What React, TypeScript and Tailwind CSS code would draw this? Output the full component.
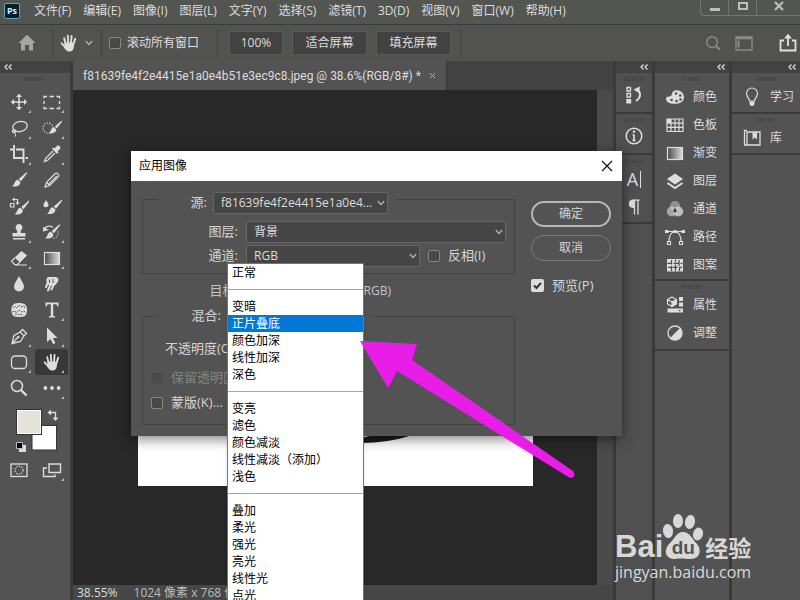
import type { ReactNode } from 'react';

const menus = ['文件(F)', '编辑(E)', '图像(I)', '图层(L)', '文字(Y)', '选择(S)', '滤镜(T)', '3D(D)', '视图(V)', '窗口(W)', '帮助(H)'];

const blendGroups = [
    ['正常'],
    ['变暗', '正片叠底', '颜色加深', '线性加深', '深色'],
    ['变亮', '滤色', '颜色减淡', '线性减淡（添加）', '浅色'],
    ['叠加', '柔光', '强光', '亮光', '线性光', '点光'],
];

/* Icons, all on a 20px grid */
function Icon({ children, className = 'size-5' }: { children: ReactNode; className?: string }) {
    return (
        <svg viewBox="0 0 20 20" className={className} fill="none" stroke="currentColor" strokeWidth="1.5" aria-hidden="true">
            {children}
        </svg>
    );
}

const brush = (
    <>
        <path d="M17.5 2.2 18.3 3 12 11.2 9.8 9Z" fill="currentColor" stroke="none" />
        <path d="M9 9.8 11.3 12C11.5 15.6 7.6 17.3 3 16.3 5.6 15.6 5.2 10.2 9 9.8Z" fill="currentColor" stroke="none" />
    </>
);

const hand = (
    <>
        <path d="M6.6 11 5.2 5.2M9.2 10 8.8 2.8M12 10 12.6 2.9M14.5 11 16.2 5.6M6.6 14.5 2.6 10.3" strokeWidth="1.9" strokeLinecap="round" />
        <path d="M5.7 9.5H15.3L14.8 14.6C14.3 17 13 18.6 10.8 18.6 8 18.6 6.8 17 5 14.4Z" fill="currentColor" stroke="none" />
    </>
);

const gradientRect = (id: string) => (
    <>
        <defs>
            <linearGradient id={id}>
                <stop offset="0" stopColor="#4a4a4a" />
                <stop offset="1" stopColor="#dddddd" />
            </linearGradient>
        </defs>
        <rect x="2.5" y="4.5" width="15" height="12" fill={`url(#${id})`} strokeWidth="1.2" />
    </>
);

const tools: { name: string; more?: boolean; active?: boolean; art: ReactNode }[] = [
    { name: '移动', more: true, art: <><path d="M10 4V16M4 10H16" /><path d="M10 1.8 13 5H7ZM10 18.2 7 15H13ZM1.8 10 5 7V13ZM18.2 10 15 13V7Z" fill="currentColor" stroke="none" /></> },
    { name: '矩形选框', more: true, art: <path d="M2 6.5V4.5H5M7.5 4.5H12M14.5 4.5H17.5V6.5M17.5 9V12M17.5 14.5V16.5H14.5M12 16.5H7.5M5 16.5H2V14.5M2 12V9" strokeWidth="1.3" /> },
    { name: '套索', more: true, art: <><ellipse cx="11" cy="8.5" rx="7.3" ry="5" transform="rotate(-12 11 8.5)" strokeWidth="1.3" /><path d="M5 11.8C2 12.5 3.5 15.5 6 14.2 8 13 6 11 5 12 4 13 7 15 6.5 18.5" strokeWidth="1.1" /></> },
    { name: '快速选择', more: true, art: <><circle cx="6" cy="10" r="5" strokeDasharray="1.2 1.5" strokeWidth="1.2" /><g transform="translate(4 .5) scale(.9)">{brush}</g></> },
    { name: '裁剪', more: true, art: <path d="M5 1V14H15M1 5.5H4M7 5.5H14.5V14M14.5 14V19M16.5 14H19" strokeWidth="1.9" /> },
    { name: '吸管', more: true, art: <><path d="M11 7 3.5 14.5 2.5 17.5 5.5 16.5 13 9" strokeWidth="1.3" /><path d="M10 4.8 15.2 10 16.5 8.5 15.5 7.5 18.2 4.8C19 3 17 1 15.2 1.8L12.5 4.5 11.5 3.5Z" fill="currentColor" stroke="none" /></> },
    { name: '画笔', art: brush },
    { name: '铅笔', art: <path d="M3 17 4.5 12.3 13.3 3.5C15 2 18 5 16.5 6.7L7.7 15.5ZM4.5 12.3 7.7 15.5M6.8 14.2 15 6" strokeWidth="1.2" /> },
    { name: '颜色替换', art: <><path d="M1.5 7.5H5V11H1.5ZM4.5 3.5H8.5V7" strokeWidth="1.2" /><path d="M5.5 1.2V5.8L3 3.5ZM6.2 6.5H10.8L8.5 9Z" fill="currentColor" stroke="none" /><g transform="translate(2.5 2)">{brush}</g></> },
    { name: '混合画笔', art: <><path d="M4 4C5.5 6.5 7 8 6.5 9.6A2.7 2.7 0 0 1 1.4 9.4C1.2 8 3 6.5 4 4Z" fill="currentColor" stroke="none" /><g transform="translate(2 1.5)">{brush}</g></> },
    { name: '仿制图章', more: true, art: <path d="M10 2A3.5 3.5 0 0 1 12.4 8C11.5 9 11.5 10 12 11H16.5V14.5H3.5V11H8C8.5 10 8.5 9 7.6 8A3.5 3.5 0 0 1 10 2ZM4 16H16V17.5H4Z" fill="currentColor" stroke="none" /> },
    { name: '历史记录画笔', more: true, art: <><path d="M1.5 8.5C3 4 7.5 3 11 5.5" strokeWidth="1.2" /><path d="M1 5 7 8 1 9.5Z" fill="currentColor" stroke="none" /><path d="M16 9.5C17 13 14 16.5 10.5 16.5" strokeDasharray="1.2 1.5" strokeWidth="1.1" />{brush}</> },
    { name: '橡皮擦', more: true, art: <><path d="M12.5 3.5 17.5 7.5 11 14 6.2 9.5Z" fill="currentColor" strokeWidth="1" /><path d="M6 9.8 2.5 13.2 5.5 16.5H8.5L10.8 14.2M6 17H18" strokeWidth="1.2" /></> },
    { name: '渐变', more: true, art: gradientRect('tool-gradient') },
    { name: '模糊', art: <path d="M10 2C12 6 15 9.5 15 12.5A5 5 0 0 1 5 12.5C5 9.5 8 6 10 2Z" fill="currentColor" stroke="none" /> },
    { name: '涂抹', art: <><path d="M6 3H14C16.5 3.5 17 5.5 16 7.5L13.5 11 8 12 5 9.5C4 7 4 4.5 6 3Z" fill="currentColor" stroke="none" /><path d="M6.5 7 4 13M9.5 8 6 16.5M13 8 9.5 15.5" strokeWidth="2" strokeLinecap="round" /><path d="M7.5 5.5V9M11 5V9" stroke="#535353" strokeWidth="1" /></> },
    { name: '海绵', art: <><path d="M5 4C8 2.5 14 2.5 16 4.5 19 7 18.5 13 16.5 15.5 14 17.5 7 17.5 4.5 16 1.5 13 1.5 6.5 5 4Z" fill="currentColor" stroke="none" /><path d="M4 8 6 6 8 8 10 5 12 7 15 6 16 9M3 12 6 11 7 13 10 10 12 12 15 11 17 13M6 15 8 14 11 15 14 14" stroke="#535353" strokeWidth=".9" strokeDasharray="2 1" /></> },
    { name: '文字', more: true, art: <path d="M3.5 2.5H16.5V6.5H15.3C15 4.8 14.5 4.3 13 4.3H11.2V15C11.2 16 11.7 16.3 13.2 16.5V17.5H6.8V16.5C8.3 16.3 8.8 16 8.8 15V4.3H7C5.5 4.3 5 4.8 4.7 6.5H3.5Z" fill="currentColor" stroke="none" /> },
    { name: '钢笔', more: true, art: <><path d="M3 17.5 5 9.5 11 6 15 9.8 11.5 15.5ZM3 17.5 9 11.3M11 6 13.5 3.5 17.5 7.5 15 9.8" strokeWidth="1.3" /><circle cx="9.3" cy="11" r="1.2" fill="currentColor" stroke="none" /></> },
    { name: '路径选择', more: true, art: <path d="M5 1.5 15.5 12H10.8L13.5 17 11.2 18.2 8.5 13 5 16Z" fill="currentColor" stroke="none" /> },
    { name: '圆角矩形', more: true, art: <rect x="2.5" y="4" width="15" height="12.5" rx="3.5" strokeWidth="1.3" /> },
    { name: '抓手', more: true, active: true, art: hand },
    { name: '缩放', art: <><circle cx="8" cy="8" r="5.5" /><path d="M12 12 17.5 17.5" strokeWidth="2.4" /></> },
    { name: '编辑工具栏', more: true, art: <path d="M1.5 10A1.9 1.9 0 1 1 5.3 10 1.9 1.9 0 0 1 1.5 10M8.1 10A1.9 1.9 0 1 1 11.9 10 1.9 1.9 0 0 1 8.1 10M14.7 10A1.9 1.9 0 1 1 18.5 10 1.9 1.9 0 0 1 14.7 10" fill="currentColor" stroke="none" /> },
];

const colorPanels = [
    { name: '颜色', art: <><path d="M10 3.5C15 2.5 19 6 19 10.5 19 15 14 17 9 16.8 4 17 1 14.5 1 11.8 1 9 4.5 10 6 9 7.5 7.5 6.5 4.5 10 3.5Z" fill="currentColor" stroke="none" /><path d="M11 6.5h.1M15.2 8.5h.1M15.5 12.5h.1M11.5 14h.1M6.5 13h.1" stroke="#535353" strokeWidth="2.6" strokeLinecap="round" /></> },
    { name: '色板', art: <><path d="M2 4H18V16.5H2ZM2 8.2H18M2 12.3H18M6 4V16.5M10 4V16.5M14 4V16.5" strokeWidth="1.2" /><path d="M2 4H6V8H2Z" fill="currentColor" stroke="none" /></> },
    { name: '渐变', art: gradientRect('panel-gradient') },
    { name: '图层', art: <><path d="M10 2.5 18 8 10 13.5 2 8Z" fill="currentColor" stroke="none" /><path d="M2.5 12 10 17 17.5 12" strokeWidth="2" /></> },
    { name: '通道', art: <g fill="currentColor" stroke="none"><circle cx="10" cy="7" r="5" opacity=".45" /><circle cx="6.8" cy="12.5" r="5" opacity=".6" /><circle cx="13.2" cy="12.5" r="5" opacity=".75" /><path d="M10 8.5 12 12 10 14 8 12Z" fill="#444444" /></g> },
    { name: '路径', art: <><path d="M1 4.5H19M4 15C4 9 6 5 10 4.5 14 5 16 9 16 15" strokeWidth="1.2" /><path d="M0 3H3.5V6H0ZM16.5 3H20V6H16.5ZM8.5 3H11.5V6H8.5Z" fill="currentColor" stroke="none" /><path d="M2.5 14.5H5.5V17.5H2.5ZM14.5 14.5H17.5V17.5H14.5Z" fill="#535353" strokeWidth="1.2" /></> },
    { name: '图案', art: <><path d="M2 4H18V16.5H2Z" fill="currentColor" stroke="none" /><path d="M2.5 8.3H7M8.5 8.3H14M15.5 8.3H17.5M3 12.3H6M7.5 12.3H12.5M14 12.3H17M6.5 5V9.5M6.5 11V16M10.5 4.5V7M10.5 9.5V16M14 5V11M14.5 13V16" stroke="#4b4b4b" strokeWidth="1.2" /></> },
];

const adjustPanels = [
    { name: '属性', art: <><path d="M7 2 11.5 4.5V9L7 11.5 2.5 9V4.5ZM2.5 4.5 7 7 11.5 4.5M7 7V11.5" strokeWidth="1.2" /><path d="M7 7 11.5 4.5V9L7 11.5ZM14 2H18V6H14ZM14 7.5H18V11.5H14ZM2.5 13.5H18V17.5H2.5Z" fill="currentColor" stroke="none" /><path d="M13 15H16L14.5 16.5Z" fill="#535353" stroke="none" /></> },
    { name: '调整', art: <><circle cx="10" cy="10" r="7" strokeWidth="1.3" /><path d="M15 5A7 7 0 1 1 5 15Z" fill="currentColor" stroke="none" /></> },
];

const learnPanels = [
    { name: '学习', art: <><path d="M7.5 14C7.5 11.5 4.5 10 4.5 6.5A5.5 5.5 0 0 1 15.5 6.5C15.5 10 12.5 11.5 12.5 14Z" strokeWidth="1.2" /><path d="M7.5 14.5H12.5V17L11 19H9L7.5 17Z" fill="currentColor" stroke="none" /></> },
    { name: '库', art: <><path d="M5 4H18V17H5ZM5 2.5H2.5V17H5" strokeWidth="1.3" /><path d="M10.5 4.5H15V11.5L12.7 9.5 10.5 11.5Z" fill="currentColor" stroke="none" /></> },
];

function Grip() {
    return (
        <div className="flex h-2.5 justify-center pt-1">
            <div className="h-1 w-5 bg-[repeating-linear-gradient(90deg,#434343_0_1px,transparent_1px_2px)]" />
        </div>
    );
}

function Collapse({ left = false }: { left?: boolean }) {
    return (
        <div className={`flex h-3 items-center bg-[#424242] px-1 ${left ? '' : 'justify-end'}`}>
            <svg viewBox="0 0 8 6" className="h-1.5 w-2" fill="none" stroke="#dddddd" strokeWidth="1.3" aria-hidden="true">
                <path d="M3.5.5 1 3 3.5 5.5M7.5.5 5 3 7.5 5.5" />
            </svg>
        </div>
    );
}

function Chevron({ className = '' }: { className?: string }) {
    return (
        <svg viewBox="0 0 8 6" className={`pointer-events-none h-1.5 w-2 shrink-0 ${className}`} fill="none" stroke="#b5b5b5" strokeWidth="1.2" aria-hidden="true">
            <path d="M.8 1 4 4.5 7.2 1" />
        </svg>
    );
}

function PanelButton({ name, art }: { name: string; art: ReactNode }) {
    return (
        <button className="flex h-7 w-full items-center gap-2 pl-2.5 text-left">
            <Icon>{art}</Icon>
            {name}
        </button>
    );
}

function SelectBox({ id, value, className }: { id: string; value: string; className: string }) {
    return (
        <div className={`grid items-center ${className}`}>
            <select id={id} className="col-start-1 row-start-1 h-[22px] w-full appearance-none rounded-[2px] border border-[#666666] bg-[#454545] pr-2.5 pl-[7px] text-xs text-[#dddddd]">
                <option>{value}</option>
            </select>
            <Chevron className="col-start-1 row-start-1 mr-[3px] justify-self-end" />
        </div>
    );
}

function Check({ id, label, className = 'gap-2', disabled = false }: { id: string; label: string; className?: string; disabled?: boolean }) {
    return (
        <div className={`flex items-center ${className}`}>
            <input id={id} type="checkbox" disabled={disabled} className="size-3 shrink-0 appearance-none rounded-[2px] border border-[#868686] bg-[#484848] disabled:border-[#505050] disabled:bg-[#4b4b4b]" />
            <label htmlFor={id} className="whitespace-nowrap">{label}</label>
        </div>
    );
}

function MenuBar() {
    return (
        <header className="flex h-[25px] shrink-0 items-start justify-between border-b border-[#3b3c3a] bg-[#535551]">
            <div className="flex h-[22px] items-center">
                <div className="mr-3.5 ml-1 flex size-4 items-center justify-center rounded-[2px] border border-[#5aa6bd] bg-[#061e2b] text-[9px] font-bold text-[#d5f2ff]">Ps</div>
                <nav className="flex gap-3">
                    {menus.map((m) => (
                        <button key={m} className="whitespace-nowrap">{m}</button>
                    ))}
                </nav>
            </div>
            <div className="flex h-4 rounded-bl border-b border-l border-[#73756f] text-[#bdbdbb]">
                <button aria-label="最小化" className="flex w-7 items-center justify-center border-r border-[#73756f]">
                    <span className="mt-1 h-[3px] w-2.5 bg-[#bdbdbb]" />
                </button>
                <button aria-label="最大化" className="flex w-7 items-center justify-center border-r border-[#73756f]">
                    <span className="mb-1 h-2 w-2.5 border-2 border-[#bdbdbb]" />
                </button>
                <button aria-label="关闭" className="flex w-[43px] items-center justify-center">
                    <svg viewBox="0 0 10 10" className="mb-1 size-2.5" stroke="currentColor" strokeWidth="2.2" aria-hidden="true">
                        <path d="M1 1 9 9M9 1 1 9" />
                    </svg>
                </button>
            </div>
        </header>
    );
}

function OptionsBar() {
    return (
        <div className="flex h-9 shrink-0 items-center bg-[#525351]">
            <button aria-label="主页" className="ml-[17px] text-[#a5a5a5]">
                <Icon><path d="M10 1.8 18.5 10H16V17.5H12V12H8V17.5H4V10H1.5Z" fill="currentColor" stroke="none" /></Icon>
            </button>
            <div className="mr-1.5 ml-[15px] h-7 w-px bg-[#424242]" />
            <button aria-label="抓手工具" className="flex items-center gap-1.5">
                <Icon>{hand}</Icon>
                <Chevron />
            </button>
            <div className="mr-[7px] ml-2 h-7 w-px bg-[#424242]" />
            <Check id="scroll-all" label="滚动所有窗口" className="gap-1.5" />
            <div className="mr-3 ml-[18px] h-7 w-px bg-[#424242]" />
            <div className="flex gap-[11px]">
                <button className="h-[22px] w-[52px] bg-[#424242] outline-1 outline-[#595959]">100%</button>
                <button className="h-[22px] w-[73px] bg-[#424242] outline-1 outline-[#595959]">适合屏幕</button>
                <button className="h-[22px] w-[73px] bg-[#424242] outline-1 outline-[#595959]">填充屏幕</button>
            </div>
            <div className="ml-2.5 h-7 w-px bg-[#424242]" />
            <div className="ml-auto flex items-center text-[#8c8c8c]">
                <button aria-label="搜索" className="mr-3">
                    <Icon className="size-[18px]"><circle cx="9" cy="9" r="6" /><path d="M13.5 13.5 17.5 17.5" strokeWidth="2.2" /></Icon>
                </button>
                <button aria-label="工作区" className="mr-6">
                    <Icon><path d="M2 4H18V17H2ZM2 5.5H18" strokeWidth="1.3" /><path d="M4.5 7.5V14.5" strokeWidth="2" /></Icon>
                </button>
                <button aria-label="共享" className="mr-0.5 text-[#e0e0e0]">
                    <Icon><path d="M6 7.5H2.5V17.5H17.5V7.5H14M10 13V4" strokeWidth="1.8" /><path d="M10 .8 14 5.5H6Z" fill="currentColor" stroke="none" /></Icon>
                </button>
            </div>
        </div>
    );
}

function Toolbar() {
    return (
        <aside className="flex w-[70px] shrink-0 flex-col bg-[#535353]">
            <Collapse left />
            <Grip />
            <div className="mt-1.5 grid grid-cols-2 px-0.5">
                {tools.map((t) => (
                    <button key={t.name} aria-label={t.name} className={`relative flex h-[26px] items-center justify-center rounded-[3px] ${t.active ? 'bg-[#383838]' : ''}`}>
                        <Icon>{t.art}</Icon>
                        {t.more && <span className="absolute right-1 bottom-0.5 size-[3px] bg-[#b5b5b5] [clip-path:polygon(100%_0,100%_100%,0_100%)]" />}
                    </button>
                ))}
            </div>
            <svg viewBox="0 0 44 46" className="mt-[5px] ml-[15px] h-[46px] w-11 shrink-0" aria-label="前景色和背景色">
                <rect x="17" y="19.5" width="24.5" height="24.5" fill="#ffffff" stroke="#333333" />
                <rect x="1.5" y="3.5" width="25" height="25" fill="#e3e3da" stroke="#333333" />
                <rect x="2.5" y="4.5" width="23" height="23" fill="none" stroke="#ffffff" />
                <path d="M35 6.5H40.5V13" fill="none" stroke="#dddddd" strokeWidth="1.3" />
                <path d="M36 3.5V9.5L32.5 6.5ZM37.5 11.5H43.5L40.5 15Z" fill="#dddddd" />
                <path d="M4 39H11V46H4Z" fill="#dddddd" />
                <path d="M1.5 36.5H7.5V42.5H1.5Z" fill="#000000" stroke="#bbbbbb" />
            </svg>
            <div className="mt-[5px] grid grid-cols-2 px-0.5">
                <button aria-label="快速蒙版" className="flex h-[26px] items-center justify-center">
                    <Icon><rect x="2" y="4" width="16" height="12.5" strokeWidth="1.3" /><circle cx="10" cy="10.2" r="4" strokeDasharray="1.3 1.3" strokeWidth="1.2" /></Icon>
                </button>
                <button aria-label="屏幕模式" className="relative flex h-[26px] items-center justify-center">
                    <Icon><path d="M7 4H18.5V12.5H7ZM5 8H1.5V16.5H13V14.5" strokeWidth="1.4" /></Icon>
                    <span className="absolute right-1 bottom-0.5 size-[3px] bg-[#b5b5b5] [clip-path:polygon(100%_0,100%_100%,0_100%)]" />
                </button>
            </div>
        </aside>
    );
}

function DocumentArea() {
    return (
        <main className="flex min-w-0 flex-1 flex-col border-x-[3px] border-[#3a3a3a] bg-[#4a4a4a]">
            <div className="flex h-[29px] shrink-0 bg-[#424242]">
                <div className="flex items-center gap-2 border-r border-[#393939] bg-[#535353] px-2.5">
                    <span className="font-['Roboto',sans-serif] whitespace-nowrap">f81639fe4f2e4415e1a0e4b51e3ec9c8.jpeg @ 38.6%(RGB/8#) *</span>
                    <button aria-label="关闭文档">
                        <svg viewBox="0 0 8 8" className="size-[7px]" stroke="#b5b5b5" strokeWidth="1.1" aria-hidden="true">
                            <path d="M1 1 7 7M7 1 1 7" />
                        </svg>
                    </button>
                </div>
            </div>
            <div className="flex min-h-0 flex-1">
                <div className="flex flex-1 items-center justify-center bg-[#282828]">
                    <div className="h-[296px] w-[395px] bg-white">
                        <svg viewBox="0 0 395 296" className="size-full" aria-label="文档画布">
                            <path d="M205 252Q240 256 275 245L245 243Z" fill="#1c1c1c" />
                        </svg>
                    </div>
                </div>
                <div className="w-4 shrink-0 bg-[#4a4a4a]" />
            </div>
            <div className="flex h-[15px] shrink-0 items-center gap-4 bg-[#474747] pl-1 whitespace-nowrap">
                <span>38.55%</span>
                <span className="text-[#bdbdbd]">1024 像素 x 768 像素</span>
            </div>
        </main>
    );
}

function Docks() {
    return (
        <div className="flex shrink-0 gap-[3px] bg-[#3a3a3a]">
            <aside className="w-9 bg-[#505050]">
                <Collapse />
                <div className="h-[41px] border-b-2 border-[#3a3a3a]">
                    <Grip />
                    <button aria-label="历史记录" className="mx-auto mt-0.5 block">
                        <Icon><path d="M3 2.5H6.5V6H3ZM3 8.5H6.5V12H3Z" strokeWidth="1.3" /><path d="M2.3 14H7.2V18.5H2.3ZM9.5 4.5 16 1.5 15 8Z" fill="currentColor" stroke="none" /><path d="M12.5 4.5C17.5 7 17 13 12 16" strokeWidth="2" /></Icon>
                    </button>
                </div>
                <div className="h-[41px] border-b-2 border-[#3a3a3a]">
                    <Grip />
                    <button aria-label="信息" className="mx-auto mt-0.5 block">
                        <Icon><circle cx="10" cy="10" r="7.8" /><path d="M10 8.5V15M8.5 9H10M8.5 14.5H11.5" strokeWidth="1.7" /><circle cx="10" cy="5.7" r="1.2" fill="currentColor" stroke="none" /></Icon>
                    </button>
                </div>
                <div className="flex h-[69px] flex-col items-center border-b-2 border-[#3a3a3a]">
                    <Grip />
                    <button aria-label="字符" className="flex h-7 items-center gap-0.5 text-lg">
                        A<span className="h-[17px] w-px bg-[#dddddd]" />
                    </button>
                    <button aria-label="段落" className="flex h-7 items-center">
                        <Icon><path d="M10.5 2.5V17.5M14 2.5V17.5M10 3.2H15.5" strokeWidth="1.3" /><path d="M11 2.5H8.5A4.3 4.3 0 0 0 8.5 11H11Z" fill="currentColor" stroke="none" /></Icon>
                    </button>
                </div>
            </aside>
            <aside className="w-[74px] bg-[#535353]">
                <Collapse />
                <div className="border-b-2 border-[#3a3a3a]">
                    <Grip />
                    {colorPanels.map((p) => <PanelButton key={p.name} {...p} />)}
                </div>
                <div className="border-b-2 border-[#3a3a3a] pb-0.5">
                    <Grip />
                    {adjustPanels.map((p) => <PanelButton key={p.name} {...p} />)}
                </div>
            </aside>
            <aside className="w-[68px] bg-[#535353]">
                <Collapse />
                {learnPanels.map((p) => (
                    <div key={p.name} className="h-[41px] border-b-2 border-[#3a3a3a]">
                        <Grip />
                        <PanelButton {...p} />
                    </div>
                ))}
            </aside>
        </div>
    );
}

function BlendList() {
    return (
        <ul role="listbox" aria-label="混合模式" className="absolute -top-[42px] left-0 z-10 w-[137px] border border-[#2d8ac4] bg-white text-xs text-black shadow-md">
            {blendGroups.map((group, i) => (
                <li key={group[0]} role="group">
                    {i > 0 && <div className="flex h-[17px] items-center"><hr className="w-full border-[#a5a5a5]" /></div>}
                    <ul>
                        {group.map((mode) => (
                            <li
                                key={mode}
                                role="option"
                                aria-selected={mode === '正片叠底'}
                                className={`h-[17px] pl-1 leading-[17px] whitespace-nowrap ${mode === '正片叠底' ? 'bg-[#0078d7] text-white' : ''}`}
                            >
                                {mode}
                            </li>
                        ))}
                    </ul>
                </li>
            ))}
        </ul>
    );
}

function ApplyImageDialog() {
    return (
        <div role="dialog" aria-label="应用图像" className="absolute top-[151px] left-[131px] w-[491px] bg-[#535353] text-[13px] text-[#d5d5d5] shadow-[0_3px_12px_rgba(0,0,0,0.5)]">
            <div className="flex h-[30px] items-center justify-between bg-white px-2 text-xs text-black">
                <h2>应用图像</h2>
                <button aria-label="关闭" className="mr-px">
                    <svg viewBox="0 0 12 12" className="size-3" stroke="#111111" strokeWidth="1.2" aria-hidden="true">
                        <path d="M1 1 11 11M11 1 1 11" />
                    </svg>
                </button>
            </div>
            <form className="flex gap-4 px-[11px] pt-[11px] pb-[11px]">
                <div className="w-[373px]">
                    <fieldset className="h-[82px] border border-[#434343]">
                        <legend className="ml-[15px] flex h-3.5 items-start pr-2">
                            <div className="flex h-[22px] items-center">
                                <label htmlFor="source" className="w-[55px] pr-1.5 text-right">源:</label>
                                <SelectBox id="source" value="f81639fe4f2e4415e1a0e4..." className="w-[175px]" />
                            </div>
                        </legend>
                        <div className="mt-[15px] flex items-center">
                            <label htmlFor="layer" className="w-[103px] pr-2 text-right">图层:</label>
                            <SelectBox id="layer" value="背景" className="w-[260px]" />
                        </div>
                        <div className="mt-0.5 flex items-center">
                            <label htmlFor="channel" className="w-[103px] pr-2 text-right">通道:</label>
                            <SelectBox id="channel" value="RGB" className="w-[174px]" />
                            <Check id="invert" label="反相(I)" className="ml-2 gap-2" />
                        </div>
                    </fieldset>
                    <div className="flex h-[34px] items-center text-xs text-[#c5c5c5]">
                        <span className="w-[97px] text-right text-[13px]">目标:</span>
                        <span className="w-[152px] text-right whitespace-nowrap">f81639fe4...c8.jpeg(RGB)</span>
                    </div>
                    <fieldset className="h-[117px] border border-[#434343]">
                        <legend className="ml-[15px] flex h-4 items-center pr-2">
                            <label htmlFor="blend" className="w-[69px] pr-1.5 text-right">混合:</label>
                            <div className="relative">
                                <SelectBox id="blend" value="正片叠底" className="w-[136px]" />
                                <BlendList />
                            </div>
                        </legend>
                        <div className="mt-3.5 flex h-[22px] items-center pl-[22px]">
                            <label htmlFor="opacity">不透明度(O):</label>
                            <input id="opacity" defaultValue="100" className="ml-1 w-10 bg-[#454545] px-1" />
                        </div>
                        <Check id="preserve" label="保留透明区域(T)" disabled className="mt-2 ml-2 h-5 gap-2 text-[#838383]" />
                        <Check id="mask" label="蒙版(K)..." className="mt-[5px] ml-2 h-5 gap-2" />
                    </fieldset>
                </div>
                <div className="flex w-20 flex-col pt-[9px]">
                    <button type="button" className="h-[26px] rounded-full border-2 border-[#b8b8b8] text-xs">确定</button>
                    <button type="button" className="mt-2 h-[26px] rounded-full border border-[#7a7a7a] text-xs">取消</button>
                    <div className="mt-4 flex items-center gap-2">
                        <div className="grid size-[13px] shrink-0">
                            <input id="preview" type="checkbox" defaultChecked className="col-start-1 row-start-1 size-[13px] appearance-none rounded-[2px] bg-[#dddddd]" />
                            <svg viewBox="0 0 13 13" className="pointer-events-none col-start-1 row-start-1" fill="none" stroke="#333333" strokeWidth="2" aria-hidden="true">
                                <path d="M3 6.5 5.5 9 10 3.8" />
                            </svg>
                        </div>
                        <label htmlFor="preview" className="whitespace-nowrap">预览(P)</label>
                    </div>
                </div>
            </form>
        </div>
    );
}

function Watermark() {
    return (
        <div className="absolute right-[43px] bottom-4 w-[142px] text-[#d8d8d8]">
            <div className="flex h-12 items-end">
                <span className="font-['Liberation_Sans',sans-serif] text-[31px] leading-[26px] font-bold">Bai</span>
                <div className="relative -ml-0.5 flex h-12 w-[44px] items-end justify-center">
                    <svg viewBox="0 0 44 48" className="absolute inset-0 h-12 w-11" fill="currentColor" aria-hidden="true">
                        <ellipse cx="7" cy="19" rx="5" ry="7" transform="rotate(-8 7 19)" />
                        <ellipse cx="17" cy="9" rx="5" ry="7" />
                        <ellipse cx="29" cy="10" rx="5" ry="7" transform="rotate(10 29 10)" />
                        <ellipse cx="37" cy="22" rx="5" ry="6.5" transform="rotate(15 37 22)" />
                        <path d="M22 20C29 20 31 27 36 32 41 38 39 47 30 47 25 47 19 46 14 47 5 47 2 39 8 32 13 28 15 20 22 20Z" />
                    </svg>
                    <span className="relative font-['Liberation_Sans',sans-serif] text-[19px] leading-6 font-bold text-[#535353]">du</span>
                </div>
                <span className="text-[23px] leading-6 font-bold">经验</span>
            </div>
            <div className="text-base leading-6">jingyan.baidu.com</div>
        </div>
    );
}

export default function App() {
    return (
        <div className="relative flex h-screen flex-col overflow-hidden bg-[#535353] font-['Open_Sans','Noto_Sans_CJK_SC',sans-serif] text-xs text-[#dddddd]">
            <MenuBar />
            <OptionsBar />
            <div className="flex min-h-0 flex-1">
                <Toolbar />
                <DocumentArea />
                <Docks />
            </div>
            <ApplyImageDialog />
            {/* Pointer to the selected blend mode */}
            <svg viewBox="0 0 216 138" className="pointer-events-none absolute top-[341px] left-[360px] z-20 h-[138px] w-[216px]" aria-hidden="true">
                <path d="M0 0 57 3 52 19 213 130Q217 136 210 137L37 30 28 47Z" fill="#e81ee8" />
            </svg>
            <Watermark />
        </div>
    );
}
